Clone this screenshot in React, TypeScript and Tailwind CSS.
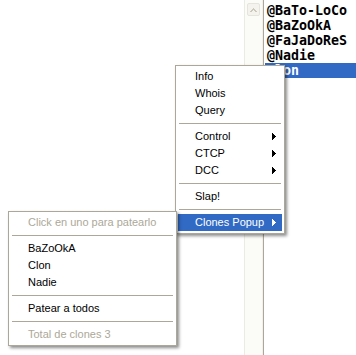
import React from 'react';

type Item =
  | { kind: 'item'; label: string; sub?: boolean; active?: boolean; disabled?: boolean }
  | { kind: 'sep' };

const MAIN_MENU: Item[] = [
  { kind: 'item', label: 'Info' },
  { kind: 'item', label: 'Whois' },
  { kind: 'item', label: 'Query' },
  { kind: 'sep' },
  { kind: 'item', label: 'Control', sub: true },
  { kind: 'item', label: 'CTCP', sub: true },
  { kind: 'item', label: 'DCC', sub: true },
  { kind: 'sep' },
  { kind: 'item', label: 'Slap!' },
  { kind: 'sep' },
  { kind: 'item', label: 'Clones Popup', sub: true, active: true },
];

const CLONES_MENU: Item[] = [
  { kind: 'item', label: 'Click en uno para patearlo', disabled: true },
  { kind: 'sep' },
  { kind: 'item', label: 'BaZoOkA' },
  { kind: 'item', label: 'Clon' },
  { kind: 'item', label: 'Nadie' },
  { kind: 'sep' },
  { kind: 'item', label: 'Patear a todos' },
  { kind: 'sep' },
  { kind: 'item', label: 'Total de clones 3', disabled: true },
];

const NICKS = ['@BaTo-LoCo', '@BaZoOkA', '@FaJaDoReS', '@Nadie', 'Clon'];

// little 4x7 pixel arrow, like the XP submenu marker
const SubArrow = ({ white }: { white?: boolean }) => (
  <svg width="4" height="7" viewBox="0 0 4 7" shapeRendering="crispEdges" className="block">
    <g fill={white ? '#ffffff' : '#000000'}>
      <rect x="0" y="0" width="1" height="7" />
      <rect x="1" y="1" width="1" height="5" />
      <rect x="2" y="2" width="1" height="3" />
      <rect x="3" y="3" width="1" height="1" />
    </g>
  </svg>
);

const PopupMenu = ({ items, className }: { items: Item[]; className: string }) => (
  <div
    className={`absolute bg-white border border-[#aca899] px-[2px] py-[2px] shadow-[2px_2px_3px_rgba(0,0,0,0.45)] font-['Liberation_Sans',Arial,sans-serif] text-[11px] leading-none ${className}`}
  >
    {items.map((it, i) =>
      it.kind === 'sep' ? (
        <div key={i} className="h-[9px] flex items-center px-px">
          <div className="h-px w-full bg-[#aca899]" />
        </div>
      ) : (
        <div
          key={i}
          className={`h-[17px] flex items-center justify-between pl-[17px] pr-[6px] whitespace-nowrap ${
            it.active ? 'bg-[#316ac5] text-white' : it.disabled ? 'text-[#aca899]' : 'text-black'
          }`}
        >
          <span>{it.label}</span>
          {it.sub && <SubArrow white={it.active} />}
        </div>
      )
    )}
  </div>
);

export default function App() {
  return (
    <div className="relative w-[356px] h-[355px] overflow-hidden bg-white flex">
      {/* empty channel area */}
      <div className="w-[244px] h-full bg-white" />

      {/* scrollbar, disabled */}
      <div className="w-[19px] h-full bg-[#fbfbf8] border-l border-[#ecebe3] border-r border-r-[#f1f0ea] flex flex-col items-center pt-[3px]">
        <div className="w-[13px] h-[13px] rounded-[2px] border border-[#e6e5dc] bg-[#f4f3ee] flex items-center justify-center">
          <svg width="7" height="4" viewBox="0 0 7 4" shapeRendering="crispEdges">
            <g fill="#cbc9bc">
              <rect x="3" y="0" width="1" height="1" />
              <rect x="2" y="1" width="3" height="1" />
              <rect x="1" y="2" width="2" height="1" />
              <rect x="4" y="2" width="2" height="1" />
              <rect x="0" y="3" width="2" height="1" />
              <rect x="5" y="3" width="2" height="1" />
            </g>
          </svg>
        </div>
      </div>

      {/* nick list */}
      <div className="flex-1 h-full border-l border-[#aca899] bg-white pt-[3px] pl-px font-['DejaVu_Sans_Mono','Liberation_Mono',monospace] font-bold text-[13.3px]">
        {NICKS.map((n) => (
          <div
            key={n}
            className={`h-[15px] leading-[15px] pl-[2px] whitespace-nowrap ${
              n === 'Clon' ? 'bg-[#316ac5] text-white' : 'text-black'
            }`}
          >
            {n}
          </div>
        ))}
      </div>

      <PopupMenu items={MAIN_MENU} className="left-[175px] top-[65px] w-[110px] z-10" />
      <PopupMenu items={CLONES_MENU} className="left-[8px] top-[211px] w-[169px] z-20" />
    </div>
  );
}
